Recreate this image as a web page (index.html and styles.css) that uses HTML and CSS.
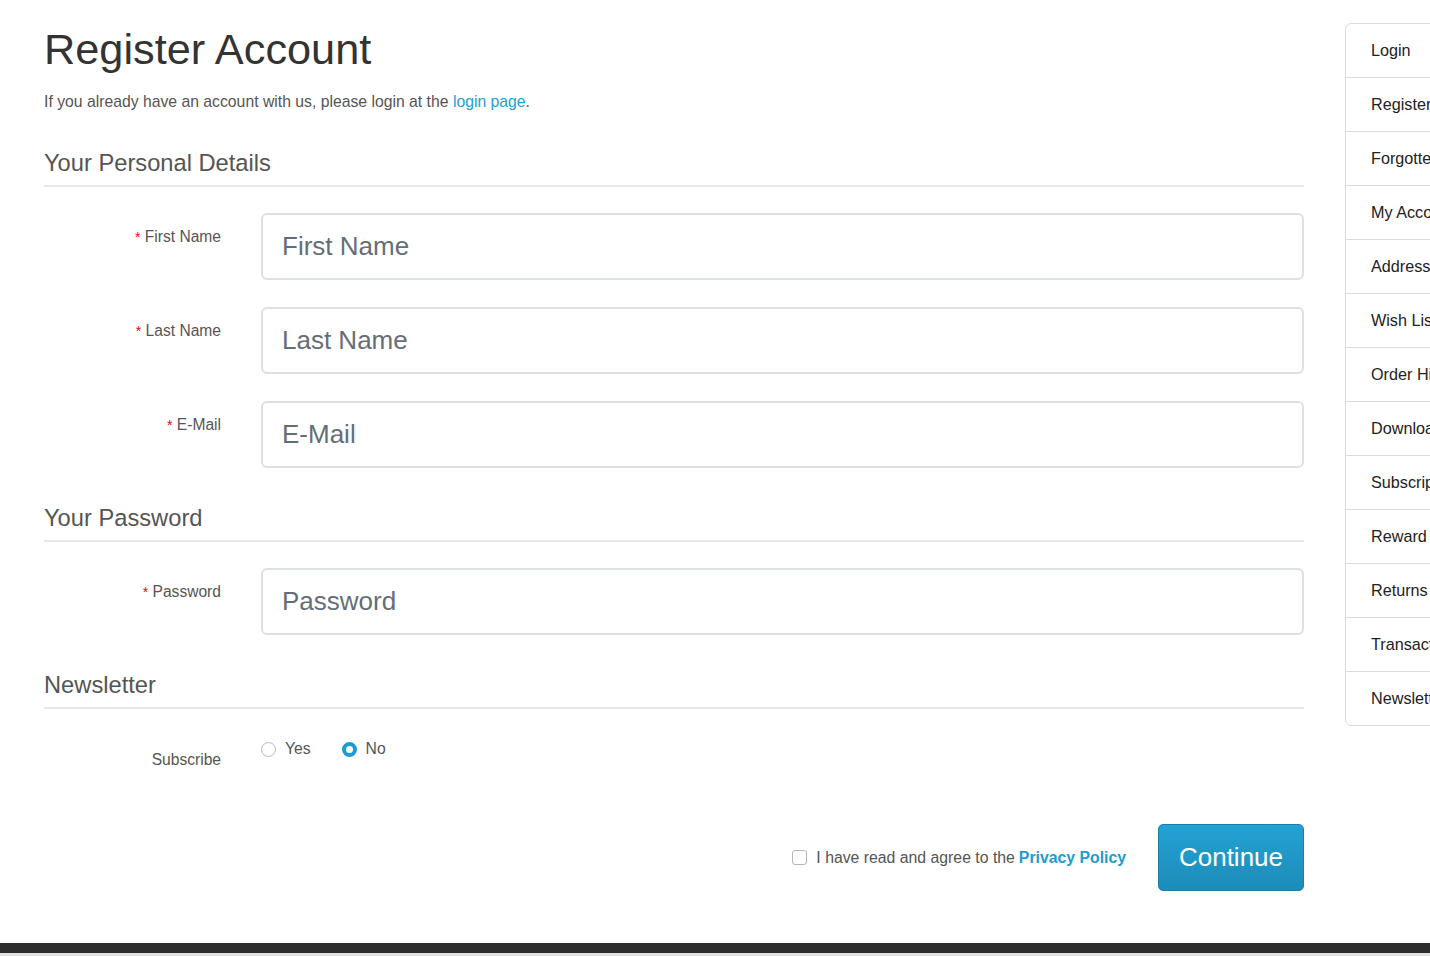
FILE: index.html
```html
<!DOCTYPE html>
<html lang="en">
<head>
<meta charset="utf-8">
<title>Register Account</title>
<link rel="stylesheet" href="styles.css">
</head>
<body>
<div class="page">
  <main class="main">
    <h1 class="title">Register Account</h1>
    <p class="intro">If you already have an account with us, please login at the <a href="#" class="link">login page</a>.</p>

    <section class="section section-first">
      <h2 class="legend">Your Personal Details</h2>
      <div class="row">
        <label class="label"><span class="req">*</span> First Name</label>
        <input class="input" type="text" placeholder="First Name">
      </div>
      <div class="row">
        <label class="label"><span class="req">*</span> Last Name</label>
        <input class="input" type="text" placeholder="Last Name">
      </div>
      <div class="row">
        <label class="label"><span class="req">*</span> E-Mail</label>
        <input class="input" type="email" placeholder="E-Mail">
      </div>
    </section>

    <section class="section">
      <h2 class="legend">Your Password</h2>
      <div class="row">
        <label class="label"><span class="req">*</span> Password</label>
        <input class="input" type="password" placeholder="Password">
      </div>
    </section>

    <section class="section">
      <h2 class="legend">Newsletter</h2>
      <div class="row row-radio">
        <span class="label label-sub">Subscribe</span>
        <div class="radios">
          <label class="opt"><span class="radio"></span>Yes</label>
          <label class="opt"><span class="radio radio-on"></span>No</label>
        </div>
      </div>
    </section>

    <div class="actions">
      <label class="agree"><span class="check"></span>I have read and agree to the <a href="#" class="policy">Privacy Policy</a></label>
      <button class="btn" type="button">Continue</button>
    </div>
  </main>

  <aside class="side">
    <a class="side-item" href="#">Login</a>
    <a class="side-item" href="#">Register</a>
    <a class="side-item" href="#">Forgotten Password</a>
    <a class="side-item" href="#">My Account</a>
    <a class="side-item" href="#">Address Book</a>
    <a class="side-item" href="#">Wish List</a>
    <a class="side-item" href="#">Order History</a>
    <a class="side-item" href="#">Downloads</a>
    <a class="side-item" href="#">Subscriptions</a>
    <a class="side-item" href="#">Reward Points</a>
    <a class="side-item" href="#">Returns</a>
    <a class="side-item" href="#">Transactions</a>
    <a class="side-item" href="#">Newsletter</a>
  </aside>
</div>
<footer class="footer"></footer>
</body>
</html>
```

FILE: styles.css
```css
html, body {
  margin: 0;
  padding: 0;
  background: #fff;
  overflow-x: hidden;
}
body {
  font-family: "Liberation Sans", Arial, sans-serif;
  color: #555;
  width: 1430px;
}
.page {
  display: flex;
  align-items: flex-start;
  gap: 41px;
  padding-left: 44px;
  height: 943px;
  box-sizing: border-box;
  overflow: hidden;
}
.main {
  width: 1260px;
  flex: none;
}
.title {
  margin: 24px 0 0;
  font-size: 43.3px;
  font-weight: 400;
  line-height: 50px;
  color: #333;
}
.intro {
  margin: 18px 0 0;
  font-size: 15.75px;
  line-height: 20px;
  color: #555;
}
.link {
  color: #1e9fd4;
  text-decoration: none;
}
.section {
  margin: 0;
  padding: 10px 0 0;
}
.section-first {
  margin-top: 38px;
  padding-top: 0;
}
.legend {
  margin: 0 0 26px;
  padding: 0 0 9px;
  font-size: 23.7px;
  font-weight: 400;
  line-height: 26px;
  color: #555;
  border-bottom: 2px solid #e8e8e8;
}
.row {
  display: grid;
  grid-template-columns: 177px 1fr;
  column-gap: 40px;
  margin-bottom: 27px;
}
.label {
  text-align: right;
  font-size: 15.6px;
  line-height: 20px;
  padding-top: 14px;
  color: #555;
}
.req {
  color: #f00;
  font-size: 14px;
}
.input {
  height: 67px;
  box-sizing: border-box;
  border: 2px solid #dde1e5;
  border-radius: 6px;
  padding: 0 19px;
  font-family: "Liberation Sans", Arial, sans-serif;
  font-size: 26px;
  color: #333;
  background: #fff;
  outline: none;
}
.input::placeholder {
  color: #656e77;
}
.row-radio {
  margin-bottom: 0;
}
.label-sub {
  padding-top: 15px;
}
.radios {
  display: flex;
  gap: 31px;
  padding-top: 4px;
  height: 40px;
}
.opt {
  display: flex;
  align-items: center;
  gap: 9px;
  font-size: 15.7px;
  line-height: 20px;
  color: #555;
  height: 20px;
}
.radio {
  width: 15px;
  height: 15px;
  box-sizing: border-box;
  border: 1px solid #b8b8b8;
  border-radius: 50%;
  background: #fff;
}
.radio-on {
  border: 4px solid #1e9bd0;
}
.actions {
  display: flex;
  justify-content: flex-end;
  align-items: center;
  gap: 32px;
  margin-top: 45px;
}
.agree {
  display: flex;
  align-items: center;
  font-size: 15.8px;
  color: #555;
}
.check {
  width: 15px;
  height: 15px;
  box-sizing: border-box;
  border: 1px solid #b5b5b5;
  border-radius: 3px;
  margin-right: 9px;
  background: #fff;
}
.policy {
  color: #1e9bd0;
  font-weight: 700;
  text-decoration: none;
  margin-left: 4px;
}
.btn {
  width: 146px;
  height: 67px;
  border: 1px solid #1b7fa9;
  border-radius: 5px;
  background: linear-gradient(#23a2d4, #1c8cb9);
  color: #fff;
  font-family: "Liberation Sans", Arial, sans-serif;
  font-size: 26px;
  padding: 0;
}
.side {
  flex: none;
  width: 260px;
  margin-top: 23px;
  border: 1px solid #dcdcdc;
  border-radius: 6px;
  display: flex;
  flex-direction: column;
}
.side-item {
  display: block;
  height: 53px;
  line-height: 52px;
  padding-left: 25px;
  font-size: 16.2px;
  color: #222;
  text-decoration: none;
  border-bottom: 1px solid #dcdcdc;
  white-space: nowrap;
}
.side-item:last-child {
  border-bottom: 0;
}
.footer {
  height: 10px;
  background: #2d2d2d;
  border-bottom: 3px solid #e2e2e2;
}
```
